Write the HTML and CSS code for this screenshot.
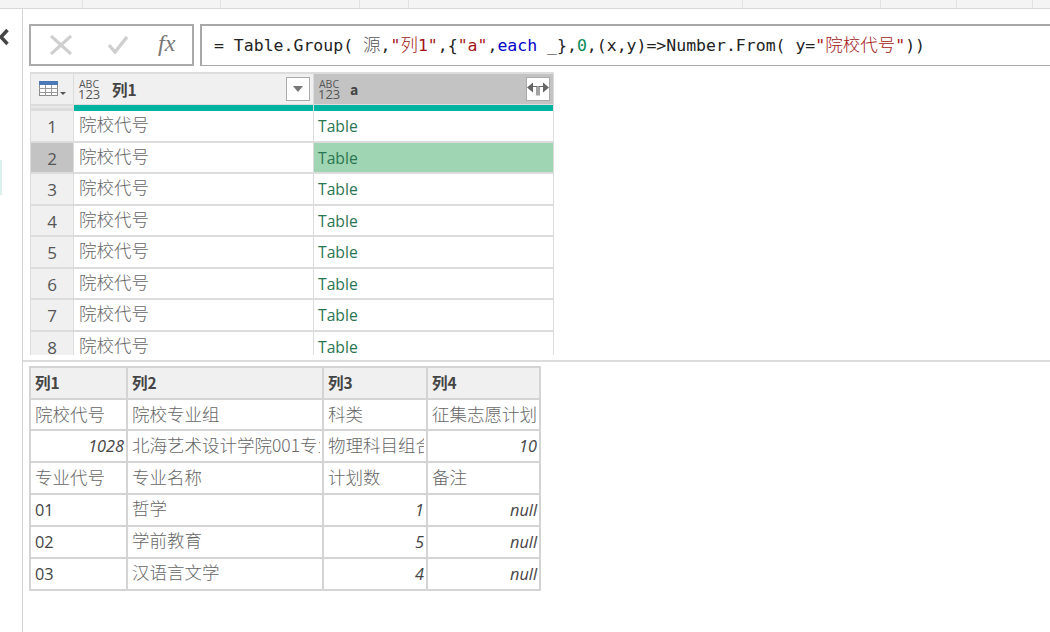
FILE: index.html
```html
<!DOCTYPE html>
<html lang="zh">
<head>
<meta charset="utf-8">
<title>Power Query</title>
<link rel="stylesheet" href="styles.css">
</head>
<body>
<header class="ribbon">
  <span class="rib rib-a"></span><span class="rib rib-b"></span><span class="rib rib-c"></span><span class="rib rib-d"></span><span class="rib rib-e"></span><span class="rib rib-f"></span><span class="rib rib-g"></span><span class="rib rib-h"></span>
</header>
<div class="app">
  <aside class="side">
    <svg class="chev" width="10" height="18" viewBox="0 0 10 18"><path d="M8.500 2 2 9l6.500 7" fill="none" stroke="#444" stroke-width="3.400"/></svg>
    <div class="side-mark"></div>
  </aside>
  <main class="main">
    <div class="formula-row">
      <div class="fx-box">
        <svg width="22" height="20" viewBox="0 0 22 20"><path d="M1 1l20 18M21 1 1 19" stroke="#cfcfcf" stroke-width="3.200"/></svg>
        <svg class="check" width="22" height="18" viewBox="0 0 22 18"><path d="M2 9l6 7L20 1" fill="none" stroke="#cfcfcf" stroke-width="3.400"/></svg>
        <span class="fx">fx</span>
      </div>
      <div class="formula">= Table.Group( <span class="cjk src">源</span>,<span class="str">"<span class="cjk">列</span>1"</span>,{<span class="str">"a"</span>,<span class="kw">each</span> _},<span class="num">0</span>,(x,y)=&gt;Number.From( y=<span class="str">"<span class="cjk">院校代号</span>"</span>))</div>
    </div>
    <div class="grid-clip">
      <div class="qgrid">
        <div class="q-corner">
          <svg width="28" height="16" viewBox="0 0 28 16"><rect x="0.500" y="0.500" width="18" height="14" fill="#fff" stroke="#8a8a8a"/><rect x="0" y="0" width="19" height="4" fill="#4a7ab8"/><path d="M6.500 4v11M12.500 4v11M0 7.500h19M0 11.500h19" stroke="#9a9a9a"/><path d="M21 11h6l-3 3z" fill="#555"/></svg>
        </div>
        <div class="q-head">
          <span class="type"><span>ABC</span><span>123</span></span>
          <span class="q-title">列1</span>
          <span class="drop"><i class="tri"></i></span>
        </div>
        <div class="q-head sel">
          <span class="type"><span>ABC</span><span>123</span></span>
          <span class="q-title small">a</span>
          <span class="drop expand">
            <svg width="22" height="16" viewBox="0 0 22 16"><path d="M0 6.500l6-5v10zM22 6.500l-6-5v10z" fill="#666"/><path d="M6 5.500h4v9M16 5.500h-4v9" fill="none" stroke="#666" stroke-width="1.200"/></svg>
          </span>
        </div>
        <div class="q-rule-l"></div><div class="q-rule"></div><div class="q-rule"></div>

        <div class="rn">1</div><div class="c txt">院校代号</div><div class="c tbl">Table</div>
        <div class="rn on">2</div><div class="c txt">院校代号</div><div class="c tbl on">Table</div>
        <div class="rn">3</div><div class="c txt">院校代号</div><div class="c tbl">Table</div>
        <div class="rn">4</div><div class="c txt">院校代号</div><div class="c tbl">Table</div>
        <div class="rn">5</div><div class="c txt">院校代号</div><div class="c tbl">Table</div>
        <div class="rn">6</div><div class="c txt">院校代号</div><div class="c tbl">Table</div>
        <div class="rn">7</div><div class="c txt">院校代号</div><div class="c tbl">Table</div>
        <div class="rn">8</div><div class="c txt">院校代号</div><div class="c tbl">Table</div>
      </div>
    </div>
    <div class="preview">
      <table class="ptable">
        <colgroup><col class="w1"><col class="w2"><col class="w3"><col class="w4"></colgroup>
        <tr><th>列1</th><th>列2</th><th>列3</th><th>列4</th></tr>
        <tr><td>院校代号</td><td>院校专业组</td><td>科类</td><td><div class="clip">征集志愿计划</div></td></tr>
        <tr><td class="n">1028</td><td><div class="clip">北海艺术设计学院001专业组</div></td><td><div class="clip">物理科目组合</div></td><td class="n">10</td></tr>
        <tr><td>专业代号</td><td>专业名称</td><td>计划数</td><td>备注</td></tr>
        <tr><td class="code">01</td><td class="up">哲学</td><td class="n">1</td><td class="n">null</td></tr>
        <tr><td class="code">02</td><td class="up">学前教育</td><td class="n">5</td><td class="n">null</td></tr>
        <tr><td class="code">03</td><td class="up">汉语言文学</td><td class="n">4</td><td class="n">null</td></tr>
      </table>
    </div>
  </main>
</div>
</body>
</html>
```

FILE: styles.css
```css
* { box-sizing: border-box; }
html, body { margin: 0; height: 100%; overflow: hidden; background: #fff; }
body { width: 1050px; height: 632px; display: flex; flex-direction: column; font-family: "Open Sans", "Noto Sans CJK SC", sans-serif; color: #444; }

.ribbon { height: 9px; flex: none; display: flex; background: #f5f4f4; border-bottom: 1px solid #d8d8d8; }
.rib { height: 8px; border-right: 1px solid #e2e2e2; }
.rib-a { width: 83px; }
.rib-b { width: 138px; }
.rib-c { width: 139px; }
.rib-d { width: 49px; }
.rib-e { width: 334px; }
.rib-f { width: 138px; }
.rib-g { width: 76px; }
.rib-h { width: 76px; }

.app { flex: 1; display: flex; min-height: 0; }
.side { width: 23px; flex: none; border-right: 1px solid #d4d4d4; padding-top: 19px; }
.chev { display: block; margin-left: -1px; }
.side-mark { width: 2px; height: 35px; margin-top: 114px; background: #d9f0ec; }

.main { flex: 1; min-width: 0; display: flex; flex-direction: column; }

.formula-row { display: flex; gap: 6px; padding: 15px 0 0 6px; height: 57px; flex: none; }
.fx-box { width: 165px; height: 42px; border: 2px solid #ababab; display: flex; align-items: center; padding: 0 0 0 19px; }
.check { margin: 0 29px 0 35px; }
.fx { font-family: "Liberation Serif", serif; font-style: italic; font-size: 24px; color: #777; line-height: 1; margin-bottom: 4px; }
.formula { flex: 1; height: 42px; border: solid #a8a8a8; border-width: 2px 0 1px 2px; padding-left: 12px; font-family: "DejaVu Sans Mono", monospace; font-size: 16.500px; line-height: 35px; color: #222; white-space: nowrap; overflow: hidden; }
.cjk { font-family: "Noto Sans CJK SC", sans-serif; font-size: 17.500px; font-weight: 300; }
.src { color: #555; }
.str { color: #a31515; }
.kw { color: #0000c8; }
.num { color: #09885a; }

.grid-clip { height: 289px; flex: none; padding: 6px 0 0 7px; overflow: hidden; }
.qgrid { width: 524px; display: grid; grid-template-columns: 42px 239px 239px; grid-template-rows: 30px 7px; grid-auto-rows: 31.500px; background: #dcdcdc; padding: 2px 1px 0; column-gap: 1px; }
.q-corner { background: #f0f0f0; display: flex; align-items: center; padding-left: 8px; }
.q-head { background: #f0f0f0; display: flex; align-items: center; padding: 0 3px 0 4px; }
.q-head.sel { background: #c3c3c3; }
.type { display: flex; flex-direction: column; width: 22px; color: #555; line-height: 10px; font-size: 13px; text-align: center; }
.type span:first-child { font-size: 10.500px; line-height: 9px; }
.q-title { margin-left: 12px; font-weight: 700; font-size: 15.500px; flex: 1; color: #444; font-family: "Noto Sans CJK SC", sans-serif; }
.q-title.small { font-size: 14px; margin-left: 10px; }
.drop { width: 24px; height: 24px; background: #fff; border: 1px solid #aaa; display: flex; align-items: center; justify-content: center; }
.tri { width: 0; height: 0; border: 5px solid transparent; border-top: 6px solid #777; border-bottom: 0; }
.q-rule-l { background: #e8e8e8; margin: 2px 0 3px; }
.q-rule { background: #00b3a1; margin-top: 1px; }

.rn { background: #f0f0f0; text-align: center; font-size: 17px; line-height: 31px; color: #555; margin-bottom: 2px; }
.rn.on { background: #c3c3c3; }
.c { background: #fff; margin-bottom: 2px; white-space: nowrap; overflow: hidden; padding-left: 5px; }
.txt { font-family: "Noto Sans CJK SC", sans-serif; font-weight: 300; font-size: 17.500px; line-height: 26px; color: #666; }
.tbl { font-size: 15.700px; line-height: 31px; color: #2a7552; padding-left: 4px; }
.tbl.on { background: #a0d5b3; }

.preview { flex: none; border-top: 2px solid #dcdcdc; padding: 4px 0 0 6px; margin-top: 5px; }
.ptable { border-collapse: collapse; table-layout: fixed; width: 510px; border: 2px solid #d4d4d4; }
.w1 { width: 97px; }
.w2 { width: 196px; }
.w3 { width: 104px; }
.w4 { width: 113px; }
.ptable th, .ptable td { border: 2px solid #d4d4d4; height: 31.700px; padding: 0 2px 3px 4px; white-space: nowrap; overflow: hidden; text-align: left; }
.ptable th { background: #f0f0f0; font-family: "Noto Sans CJK SC", sans-serif; font-size: 15.500px; color: #444; padding-bottom: 1px; }
.ptable td { font-family: "Noto Sans CJK SC", sans-serif; font-weight: 300; font-size: 17.500px; color: #666; }
.ptable td.up { padding-bottom: 5px; }
.ptable td.n { text-align: right; font-family: "Open Sans", sans-serif; font-weight: 400; font-style: italic; font-size: 16.300px; color: #444; padding-bottom: 0; }
.ptable td.code { font-family: "Open Sans", sans-serif; font-weight: 400; font-size: 16.300px; color: #444; padding: 0 0 0 4px; }
.clip { overflow: hidden; }
```
